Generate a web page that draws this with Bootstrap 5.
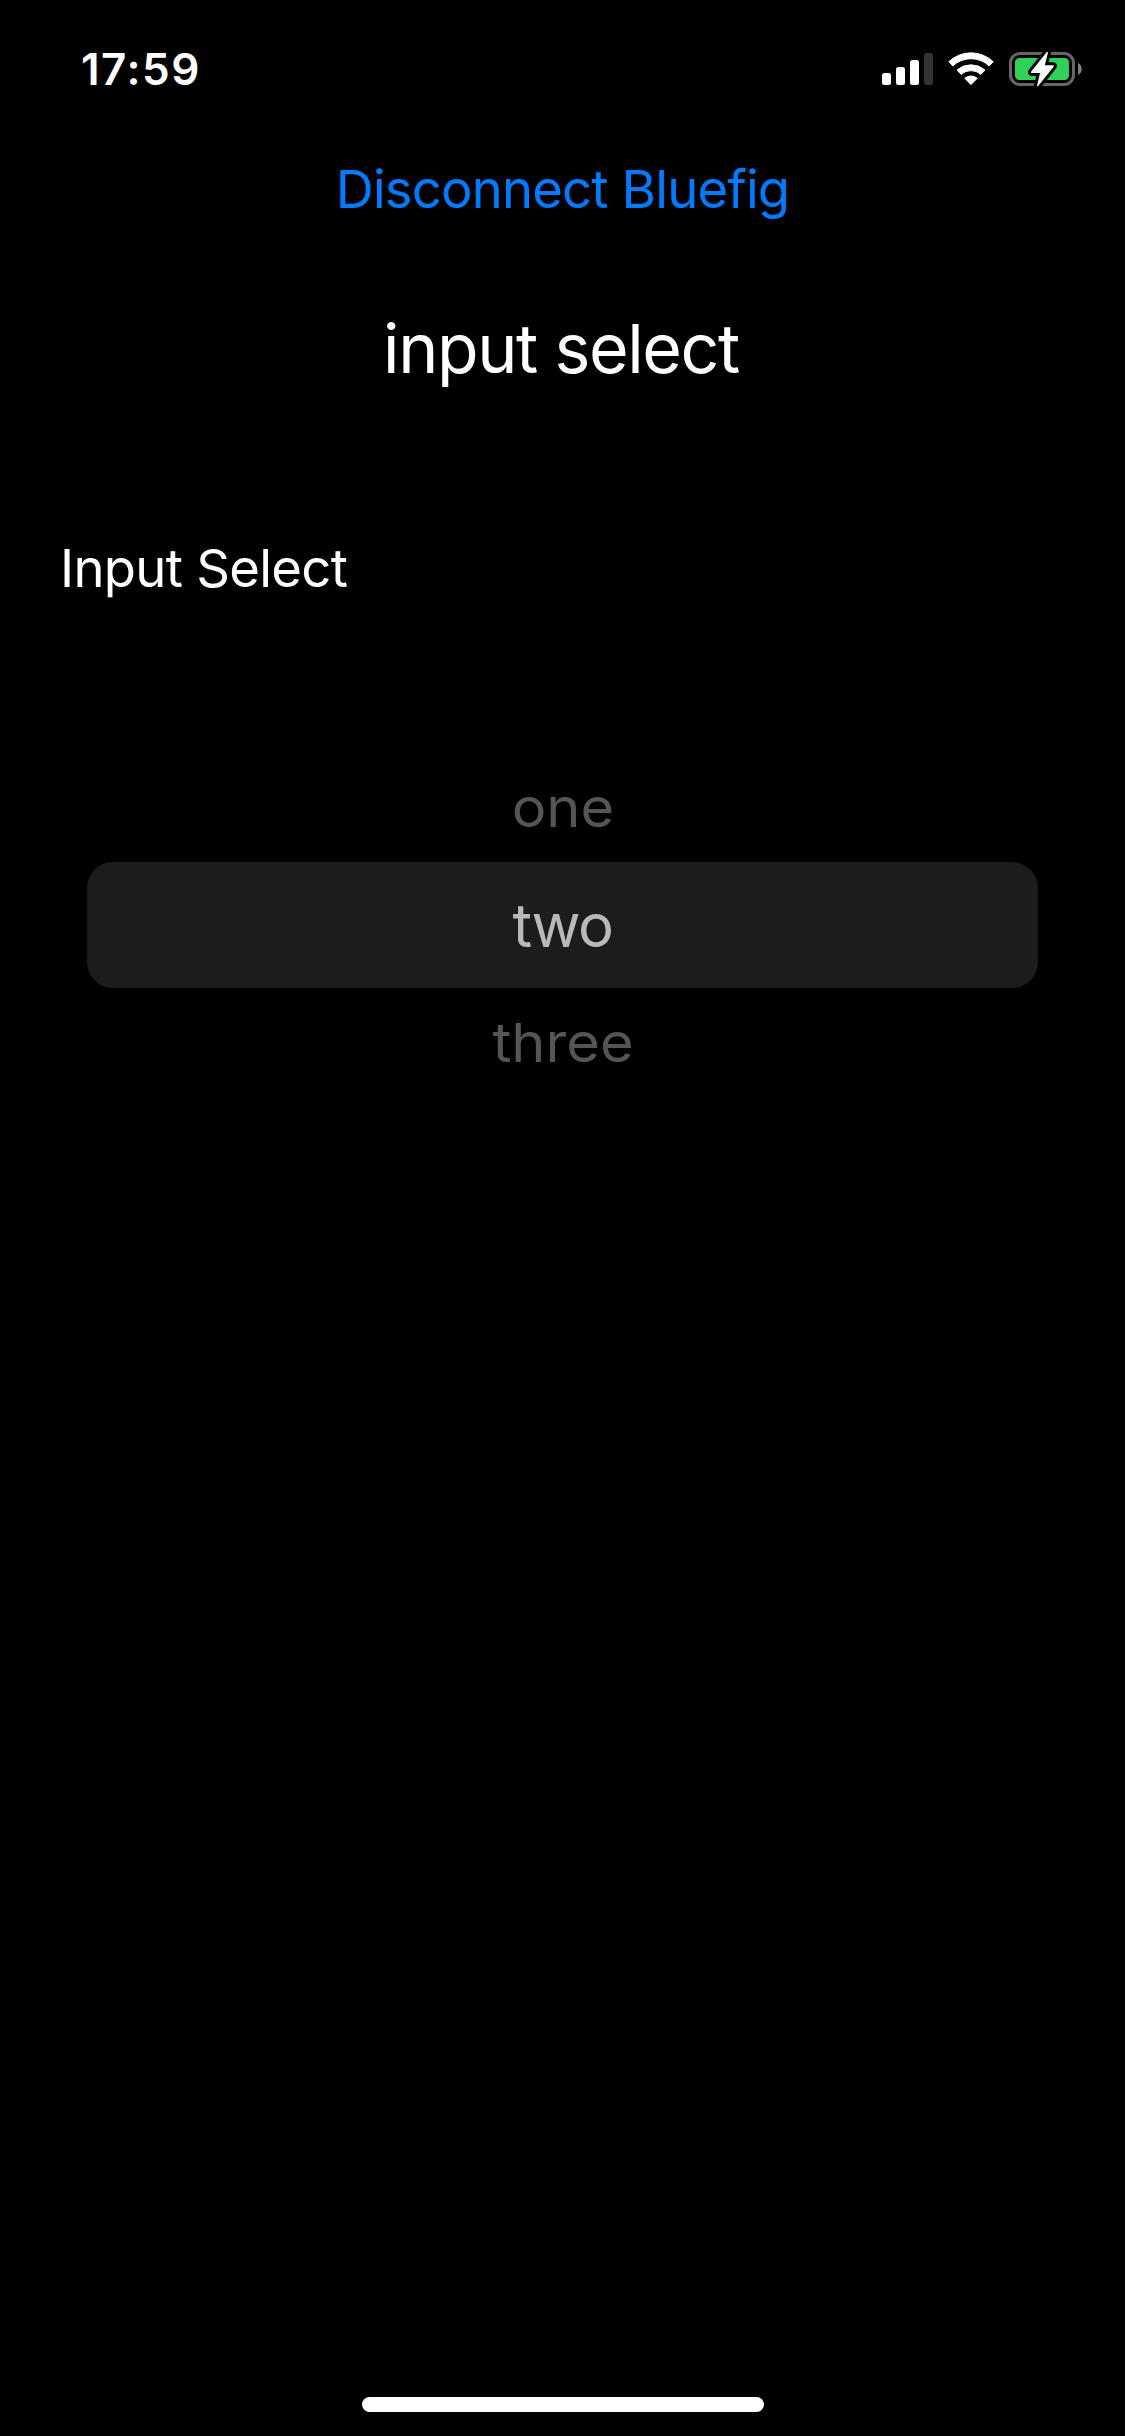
<!DOCTYPE html>
<html lang="en">
<head>
<meta charset="utf-8">
<meta name="viewport" content="width=device-width, initial-scale=1">
<title>Input Select</title>
<link href="https://cdn.jsdelivr.net/npm/bootstrap@5.3.0/dist/css/bootstrap.min.css" rel="stylesheet">
<style>
  body { background: #000; color: #fff; font-family: Inter, "Liberation Sans", sans-serif; overflow: hidden; }
  .screen { height: 2436px; }
  .status-bar { height: 138px; padding: 0 42px 0 81px; }
  .clock { font-size: 44px; font-weight: 600; letter-spacing: 1.5px; line-height: 1; }
  .status-icons { gap: 15px; }
  .btn-disconnect, .btn-disconnect:hover { height: 102px; font-size: 52.6px; color: #007aff; line-height: 1; letter-spacing: -.82px; }
  .page-title { height: 218px; padding: 0 3px 2px 0; font-size: 68px; font-weight: 400; line-height: 1; letter-spacing: -1.4px; }
  .field-label { height: 220px; padding-left: 60px; font-size: 52.6px; line-height: 1; letter-spacing: -.7px; }
  .wheel { padding: 74px 87px 0; }
  .wheel-item { height: 110px; font-size: 54px; line-height: 1; color: #555; }
  .wheel-item:first-child { padding-top: 2px; }
  .wheel-item span { transform: scaleX(1.07); }
  .wheel-item.selected { height: 126px; font-size: 60px; color: #b9b9ba; background: #1c1c1e; border-radius: 26px; letter-spacing: -1.5px; }
  .wheel-item.selected span { transform: none; }
  .home-bar { width: 402px; height: 15px; margin-bottom: 24px; }
</style>
</head>
<body>
<main class="screen d-flex flex-column">
  <header class="status-bar d-flex align-items-center justify-content-between">
    <span class="clock">17:59</span>
    <div class="status-icons d-flex align-items-center">
      <svg width="51" height="40" viewBox="882 49 51 40" aria-label="Signal">
        <g fill="#fff">
          <rect x="882" y="73" width="9" height="12" rx="2.5"/>
          <rect x="896" y="67" width="9" height="18" rx="2.5"/>
          <rect x="910" y="60" width="9" height="25" rx="2.5"/>
        </g>
        <rect x="924" y="53" width="9" height="32" rx="2.5" fill="#333"/>
      </svg>
      <svg width="46" height="40" viewBox="948 49 46 40" aria-label="Wi-Fi">
        <g fill="#fff" stroke="#fff" stroke-width="1" stroke-linejoin="round">
          <path d="M948.8 61.7A32.3 32.3 0 0 1 993.2 61.7L989.2 66A26.3 26.3 0 0 0 952.8 66Z"/>
          <path d="M957 70.1A21.3 21.3 0 0 1 985 70.1L980.8 74.4A14.6 14.6 0 0 0 961.2 74.4Z"/>
          <path d="M964.8 78.3A9.6 9.6 0 0 1 977.2 78.3L971 84.6Z"/>
        </g>
      </svg>
      <svg width="74" height="40" viewBox="1009 49 74 40" aria-label="Battery charging">
        <rect x="1010.5" y="53.5" width="63" height="31" rx="9.5" fill="none" stroke="#666" stroke-width="3"/>
        <path d="M1078 63c5 2 5 10 0 12z" fill="#808080"/>
        <rect x="1015" y="58" width="54" height="22" rx="4.5" fill="#30d158"/>
        <path d="M1046.6 52.2L1031 71.8Q1030.6 73 1031.8 73H1040L1037 85.8Q1037.4 86.8 1038.4 85.8L1053.8 66.4Q1054.2 65.2 1053 65.2H1044.8L1048 52.4Q1047.6 51.2 1046.6 52.2Z" fill="#fff" stroke="#000" stroke-width="6" stroke-linejoin="round" paint-order="stroke"/>
      </svg>
    </div>
  </header>
  <button type="button" class="btn-disconnect btn border-0 rounded-0 p-0 w-100">Disconnect Bluefig</button>
  <h1 class="page-title d-flex align-items-center justify-content-center m-0">input select</h1>
  <div class="field-label d-flex align-items-center">Input Select</div>
  <div class="wheel d-flex flex-column">
    <div class="wheel-item d-flex align-items-center justify-content-center"><span>one</span></div>
    <div class="wheel-item selected d-flex align-items-center justify-content-center"><span>two</span></div>
    <div class="wheel-item d-flex align-items-center justify-content-center"><span>three</span></div>
  </div>
  <div class="home-bar bg-white rounded-pill mt-auto mx-auto"></div>
</main>
<script src="https://cdn.jsdelivr.net/npm/bootstrap@5.3.0/dist/js/bootstrap.bundle.min.js"></script>
</body>
</html>
